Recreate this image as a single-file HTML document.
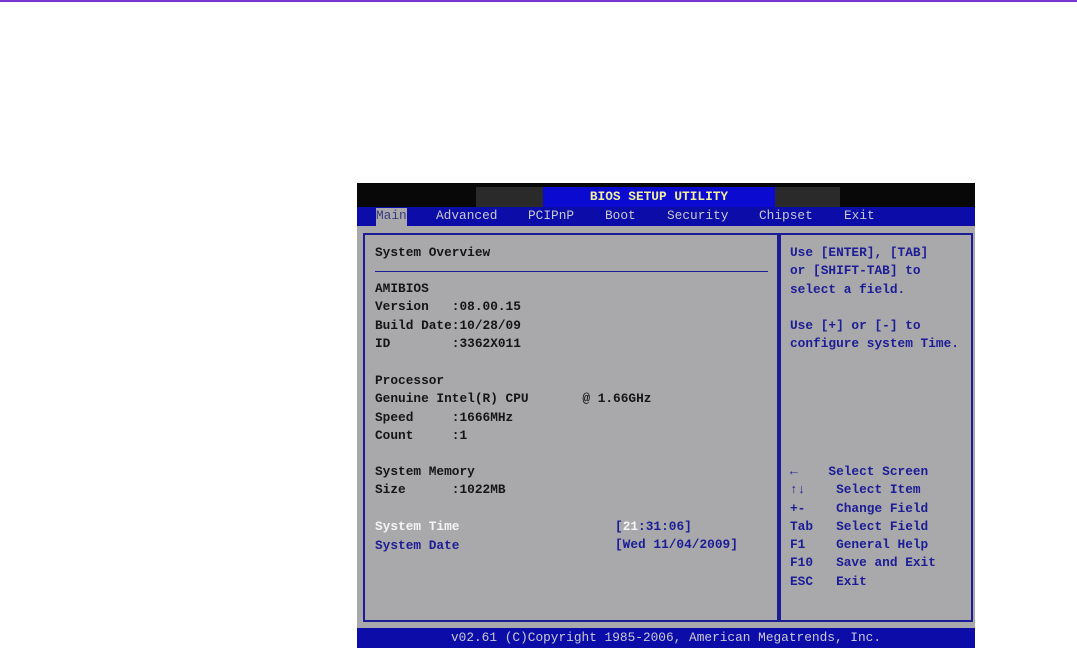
<!DOCTYPE html>
<html><head><meta charset="utf-8"><style>
body{margin:0;width:1077px;height:648px;background:#fff;position:relative;overflow:hidden;font-family:"Liberation Mono",monospace;font-weight:bold;font-size:12.8px}
div{position:absolute;white-space:pre}
.t{line-height:18.3px;color:#151515}
.b{color:#1c1c96}
.w{color:#f4f4f4}
</style></head><body>
<div style="left:0;top:0;width:1077px;height:2px;background:#7a35d6"></div>
<div style="left:357px;top:183px;width:618px;height:465px;background:#a9a9ab"></div>
<div style="left:357px;top:183px;width:618px;height:24px;background:#080808"></div>
<div style="left:476px;top:187px;width:67px;height:20px;background:#2a2a2a"></div>
<div style="left:543px;top:187px;width:232px;height:20px;background:#0a0ad0"></div>
<div style="left:775px;top:187px;width:65px;height:20px;background:#2a2a2a"></div>
<div class="t" style="left:543px;top:188px;width:232px;text-align:center;color:#f0f0a0">BIOS SETUP UTILITY</div>
<div style="left:357px;top:207px;width:618px;height:19px;background:#0c0ca8"></div>
<div style="left:376px;top:208px;width:31px;height:18px;background:#a9a9ab"></div>
<div class="t" style="left:376px;top:207px;color:#3a3a80;font-weight:normal">Main</div>
<div class="t" style="left:436px;top:207px;color:#c8c8d8;font-weight:normal">Advanced</div>
<div class="t" style="left:528px;top:207px;color:#c8c8d8;font-weight:normal">PCIPnP</div>
<div class="t" style="left:605px;top:207px;color:#c8c8d8;font-weight:normal">Boot</div>
<div class="t" style="left:667px;top:207px;color:#c8c8d8;font-weight:normal">Security</div>
<div class="t" style="left:759px;top:207px;color:#c8c8d8;font-weight:normal">Chipset</div>
<div class="t" style="left:844px;top:207px;color:#c8c8d8;font-weight:normal">Exit</div>
<div style="left:363px;top:233px;width:414px;height:385px;border:2px solid #1c1c96"></div>
<div style="left:777px;top:233px;width:192px;height:385px;border:2px solid #1c1c96"></div>
<div style="left:375px;top:271px;width:393px;height:1px;background:#1c1c96"></div>
<div class="t" style="left:375px;top:244px">System Overview</div>
<div class="t" style="left:375px;top:280px">AMIBIOS
Version   :08.00.15
Build Date:10/28/09
ID        :3362X011</div>
<div class="t" style="left:375px;top:372px">Processor
Genuine Intel(R) CPU       @ 1.66GHz
Speed     :1666MHz
Count     :1</div>
<div class="t" style="left:375px;top:463px">System Memory
Size      :1022MB</div>
<div class="t w" style="left:375px;top:518px">System Time</div>
<div class="t b" style="left:375px;top:537px">System Date</div>
<div class="t b" style="left:615px;top:518px">[<span class="w">21</span>:31:06]
[Wed 11/04/2009]</div>
<div class="t b" style="left:790px;top:244px">Use [ENTER], [TAB]
or [SHIFT-TAB] to
select a field.

Use [+] or [-] to
configure system Time.</div>
<div class="t b" style="left:790px;top:463px">←    Select Screen
↑↓    Select Item
+-    Change Field
Tab   Select Field
F1    General Help
F10   Save and Exit
ESC   Exit</div>
<div style="left:357px;top:628px;width:618px;height:20px;background:#0c0ca8"></div>
<div class="t" style="left:357px;top:629px;width:618px;text-align:center;color:#c8c8d8;font-weight:normal">v02.61 (C)Copyright 1985-2006, American Megatrends, Inc.</div>
</body></html>
